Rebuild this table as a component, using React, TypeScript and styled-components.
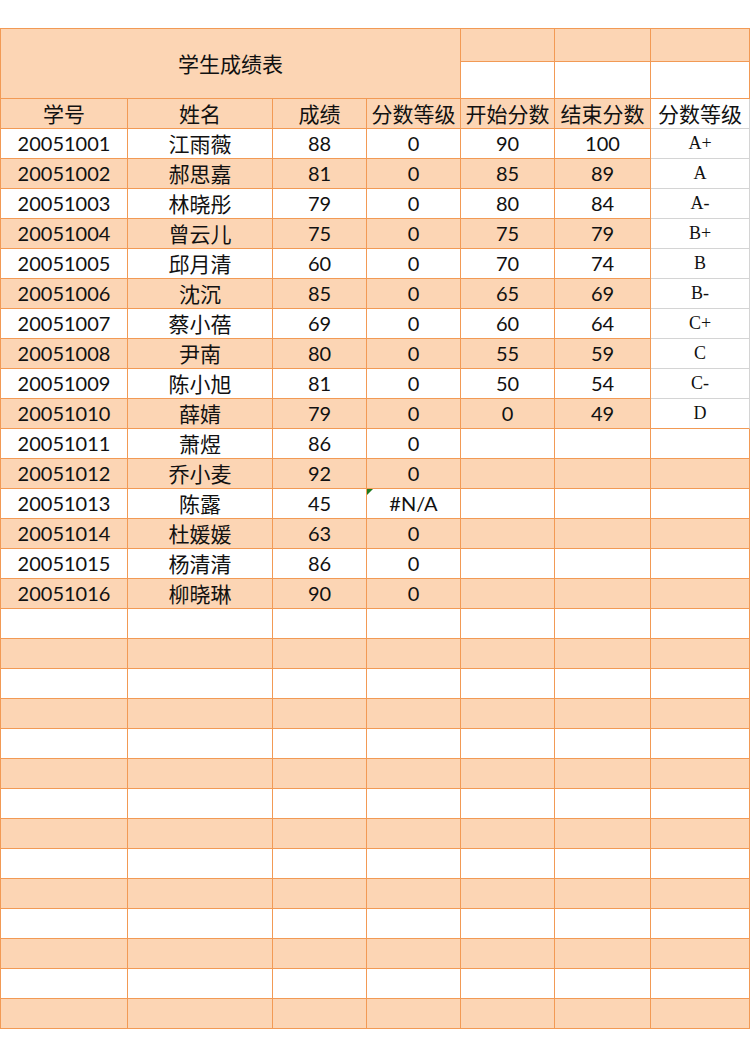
import React from "react";
import styled, { createGlobalStyle } from "styled-components";

const ORANGE_LINE = "#F29A55";
const ORANGE_FILL = "#FCD5B4";
const GRAY_LINE = "#D4D4D4";

const Global = createGlobalStyle`
  html, body { margin: 0; padding: 0; background: #fff; }
  body { font-family: "Lato", "Noto Sans CJK SC", sans-serif; color: #111; }
`;

const Page = styled.div`
  width: 750px;
  height: 1058px;
  padding-top: 28px;
  box-sizing: border-box;
  overflow: hidden;
`;

const Sheet = styled.table`
  border-collapse: separate;
  border-spacing: 0;
  table-layout: fixed;
  width: 749px;
  border-top: 1px solid ${ORANGE_LINE};
  border-left: 1px solid ${ORANGE_LINE};
`;

type CellProps = {
  $fill?: boolean;
  $h?: number;
  $gray?: boolean;
  $grayBottom?: boolean;
  $grade?: boolean;
  $cjk?: boolean;
};

const Cell = styled.td<CellProps>`
  box-sizing: border-box;
  height: ${(p) => p.$h ?? 30}px;
  padding: 0 0 1px;
  text-align: center;
  vertical-align: middle;
  white-space: nowrap;
  position: relative;
  background: ${(p) => (p.$fill ? ORANGE_FILL : "#fff")};
  border-right: 1px solid ${(p) => (p.$gray ? GRAY_LINE : ORANGE_LINE)};
  border-bottom: 1px solid
    ${(p) => (p.$gray && p.$grayBottom !== false ? GRAY_LINE : ORANGE_LINE)};
  font-family: ${(p) =>
    p.$grade
      ? `"Liberation Serif", "Noto Sans CJK SC", serif`
      : p.$cjk
      ? `"Noto Sans CJK SC", sans-serif`
      : `"Lato", "Noto Sans CJK SC", sans-serif`};
  font-size: ${(p) => (p.$grade ? 18 : p.$cjk ? 21 : 20)}px;
  line-height: 24px;
  color: #111;
`;

const ErrorMark = styled.span`
  position: absolute;
  left: 0;
  top: 0;
  width: 0;
  height: 0;
  border-top: 6px solid #1e7a1e;
  border-right: 6px solid transparent;
`;

const widths = [127, 145, 94, 94, 94, 96, 99];

const students: [string, string, string, string][] = [
  ["20051001", "江雨薇", "88", "0"],
  ["20051002", "郝思嘉", "81", "0"],
  ["20051003", "林晓彤", "79", "0"],
  ["20051004", "曾云儿", "75", "0"],
  ["20051005", "邱月清", "60", "0"],
  ["20051006", "沈沉", "85", "0"],
  ["20051007", "蔡小蓓", "69", "0"],
  ["20051008", "尹南", "80", "0"],
  ["20051009", "陈小旭", "81", "0"],
  ["20051010", "薛婧", "79", "0"],
  ["20051011", "萧煜", "86", "0"],
  ["20051012", "乔小麦", "92", "0"],
  ["20051013", "陈露", "45", "#N/A"],
  ["20051014", "杜媛媛", "63", "0"],
  ["20051015", "杨清清", "86", "0"],
  ["20051016", "柳晓琳", "90", "0"],
];

const scale: [string, string, string][] = [
  ["90", "100", "A+"],
  ["85", "89", "A"],
  ["80", "84", "A-"],
  ["75", "79", "B+"],
  ["70", "74", "B"],
  ["65", "69", "B-"],
  ["60", "64", "C+"],
  ["55", "59", "C"],
  ["50", "54", "C-"],
  ["0", "49", "D"],
];

const headers = ["学号", "姓名", "成绩", "分数等级", "开始分数", "结束分数"];

const TOTAL_ROWS = 30;

export default function App() {
  const rows = Array.from({ length: TOTAL_ROWS }, (_, i) => i);
  return (
    <Page>
      <Global />
      <Sheet>
        <colgroup>
          {widths.map((w, i) => (
            <col key={i} style={{ width: w }} />
          ))}
        </colgroup>
        <tbody>
          <tr>
            <Cell colSpan={4} rowSpan={2} $fill $cjk $h={70}>
              学生成绩表
            </Cell>
            <Cell $fill $h={33} />
            <Cell $fill $h={33} />
            <Cell $fill $h={33} />
          </tr>
          <tr>
            <Cell $h={37} />
            <Cell $h={37} />
            <Cell $h={37} />
          </tr>
          <tr>
            {headers.map((h, i) => (
              <Cell key={i} $fill $cjk>
                {h}
              </Cell>
            ))}
            <Cell $gray $cjk>
              分数等级
            </Cell>
          </tr>
          {rows.map((i) => {
            const fill = i % 2 === 1;
            const s = students[i];
            const g = scale[i];
            return (
              <tr key={i}>
                <Cell $fill={fill}>{s ? s[0] : ""}</Cell>
                <Cell $fill={fill} $cjk>
                  {s ? s[1] : ""}
                </Cell>
                <Cell $fill={fill}>{s ? s[2] : ""}</Cell>
                <Cell $fill={fill}>
                  {s && s[3] === "#N/A" && <ErrorMark />}
                  {s ? s[3] : ""}
                </Cell>
                <Cell $fill={fill}>{g ? g[0] : ""}</Cell>
                <Cell $fill={fill}>{g ? g[1] : ""}</Cell>
                {g ? (
                  <Cell $gray $grade $grayBottom={i !== 9}>
                    {g[2]}
                  </Cell>
                ) : (
                  <Cell $fill={fill} />
                )}
              </tr>
            );
          })}
        </tbody>
      </Sheet>
    </Page>
  );
}
